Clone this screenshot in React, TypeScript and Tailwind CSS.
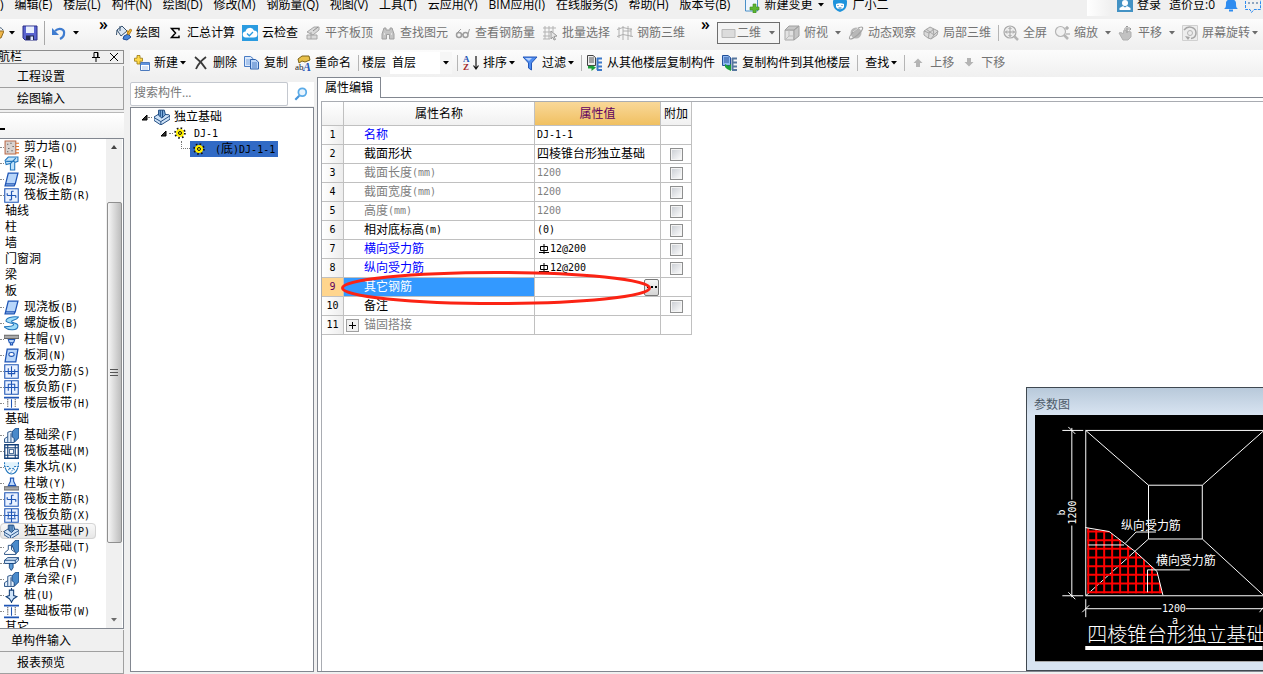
import React from "react";

const UI = "font-['Open_Sans','Noto_Sans_CJK_SC',sans-serif]";
const BITMAP = "font-['DejaVu_Sans_Mono','Noto_Sans_CJK_SC',monospace]";

/** Mixed CJK / half-width text: half-width runs are half the CJK advance. */
function Mixed({ text }: { text: string }) {
  return (
    <>
      {text.split(/([\x20-\x7e]+)/).map((part, i) =>
        /^[\x20-\x7e]+$/.test(part) ? (
          <span key={i} className="text-[10px] leading-none">{part}</span>
        ) : (
          part
        ),
      )}
    </>
  );
}

function Svg({ children, className = "size-4", box = "0 0 16 16" }: { children: React.ReactNode; className?: string; box?: string }) {
  return (
    <svg viewBox={box} className={`${className} block shrink-0`} fill="none" aria-hidden="true">
      {children}
    </svg>
  );
}

const Caret = ({ muted = false }: { muted?: boolean }) => (
  <svg viewBox="0 0 6 4" className="block h-1 w-1.5 shrink-0" aria-hidden="true">
    <path d="M0 0h6L3 3.5z" fill={muted ? "#6b6b6b" : "#000"} />
  </svg>
);

const PaintIcon = () => (
  <Svg>
    <path d="M1 5 6 1l5 5-6 5z" fill="#dbe6f2" stroke="#35506e" />
    <path d="M4 1v5M1 5l-.5 5" stroke="#35506e" />
    <path d="M11 6c2 1 1 3 1 4" stroke="#e0a020" strokeWidth="2" />
    <path d="m8 11 4-2 3 3-4 3-4-1z" fill="#4a86d8" stroke="#1c4a96" />
    <path d="m11 9 3-5 2 1-3 5z" fill="#f0b429" stroke="#8b5b12" strokeWidth=".6" />
  </Svg>
);
const SigmaIcon = () => (
  <Svg>
    <path d="M12 5.500V3.500H4.500l4 4.500-4 4.500H12v-2" stroke="#000" strokeWidth="1.500" />
  </Svg>
);
const CloudCheckIcon = () => (
  <Svg>
    <path d="M0 0h16v16H0z" fill="#2a9be0" />
    <path d="M4 12.500a3 3 0 0 1-.5-6A4.500 4.500 0 0 1 12 5.500a3.500 3.500 0 0 1 0 7z" fill="#fff" />
    <path d="m5 8.500 2.300 2.300L11 7" stroke="#2a9be0" strokeWidth="1.300" />
  </Svg>
);
const AlignSlabIcon = () => (
  <Svg>
    <path d="M2 7 9 2h5v3L8 10zM2 10h10v4H2zM6 7v7" fill="#d9d9d9" stroke="#a6a6a6" />
    <path d="m8 6 5-4" stroke="#8d8d8d" />
  </Svg>
);
const BinocularsIcon = () => (
  <Svg>
    <path d="M4 3h2v2h4V3h2l2 6v5H9.500V9.500h-3V14H2V9z" fill="#c4c4c4" stroke="#a0a0a0" />
    <path d="M4 9h1M11 9h1" stroke="#fff" />
  </Svg>
);
const GlassesIcon = () => (
  <Svg>
    <circle cx="4" cy="10" r="2.500" stroke="#9d9d9d" strokeWidth="1.500" />
    <circle cx="10.500" cy="10" r="2.500" stroke="#9d9d9d" strokeWidth="1.500" />
    <path d="M6.500 9.500h1.500M2 8l4-4M13 9l1.500-5" stroke="#9d9d9d" />
  </Svg>
);
const BatchIcon = () => (
  <Svg>
    <path d="M3 1v13M7 1v13M11 1v6M1 3h13M1 7h8M1 11h7M1 14h7" stroke="#b3b3b3" />
    <path d="m9 6 6 5-3 .5 1.500 3-1.500.5-1.300-3L9 14z" fill="#e6e6e6" stroke="#999" />
  </Svg>
);
const Rebar3dIcon = () => (
  <Svg>
    <path d="M2 2v11M6 1v14M11 1v14M14 3v9M0 4.500l6-2 9 2M0 11.500l6-2 10 2M6 6h8" stroke="#b0b0b0" />
  </Svg>
);
const FlatIcon = () => (
  <Svg>
    <path d="M1 4.500h13v8H1z" fill="#dcdcdc" stroke="#b8b8b8" />
  </Svg>
);
const CubeIcon = () => (
  <Svg>
    <path d="M1 5h9v10H1z" fill="#e2e2e2" stroke="#a8a8a8" />
    <path d="m1 5 4-4h10l-5 4zM10 5l5-4v10l-5 4z" fill="#c6c6c6" stroke="#a0a0a0" />
    <path d="M5 5v6h5M5 11l-4 4" stroke="#bcbcbc" />
  </Svg>
);
const OrbitIcon = () => (
  <Svg>
    <circle cx="8" cy="8" r="5.500" fill="#b8b8b8" />
    <ellipse cx="8" cy="8" rx="8.500" ry="2.500" transform="rotate(-42 8 8)" stroke="#a2a2a2" strokeWidth="1.200" />
    <path d="m5 7 5-4" stroke="#e0e0e0" />
  </Svg>
);
const Part3dIcon = () => (
  <Svg>
    <path d="m1 6 6-4 4 2 4 2-1 4-6 4-3-1-4-3z" fill="#dadada" stroke="#a5a5a5" />
    <path d="m1 6 5 2 5-4M6 8l-.500 5M10 4l1 6 4-4M3 4l8 6M8 14l3-4" stroke="#a5a5a5" />
  </Svg>
);
const FullIcon = () => (
  <Svg>
    <circle cx="7" cy="7" r="6" fill="#eee" stroke="#a9a9a9" strokeWidth="1.200" />
    <path d="M7 2.500v9M2.500 7h9M5.500 4 7 2.500 8.500 4M5.500 10 7 11.500 8.500 10M4 5.500 2.500 7 4 8.500M10 5.500 11.500 7 10 8.500" stroke="#a0a0a0" />
    <path d="m11.500 11.500 3.500 3.500" stroke="#b5b5b5" strokeWidth="2.500" />
  </Svg>
);
const ZoomIcon = () => (
  <Svg>
    <circle cx="6.500" cy="6.500" r="5" fill="#f1f1f1" stroke="#b5b5b5" strokeWidth="1.200" />
    <path d="m10 10 4 4" stroke="#b5b5b5" strokeWidth="2.500" />
    <path d="M13 1v4M11 3h4M12 9h4" stroke="#9a9a9a" />
  </Svg>
);
const PanIcon = () => (
  <Svg>
    <path d="M1 8c2-1 3 0 4 1l1-4 3 1 4 1v5l-3 3H5z" fill="#c2c2c2" stroke="#b0b0b0" />
    <path d="M9 1v7M6 4h7M7.500 2.500 9 1l1.500 1.500M11.500 2.500 13 4l-1.500 1.500" stroke="#999" />
  </Svg>
);
const RotateIcon = () => (
  <Svg>
    <path d="M.500.500h15v15H.500z" fill="#ededed" stroke="#d0d0d0" />
    <path d="M2 5c4-5 12-3 12 3 0 3-2 5-5 5.500" stroke="#a5a5a5" strokeWidth="1.500" />
    <circle cx="8" cy="8" r="2.500" stroke="#b5b5b5" />
    <path d="m3 11 5 1-2 3z" fill="#a5a5a5" />
  </Svg>
);

const OpenIcon = () => (
  <Svg className="h-4 w-1" box="12 0 4 16">
    <path d="M8 13 11 6h5l-3 7z" fill="#f0b648" stroke="#8f6a25" />
    <path d="M9 5c2-3 4-3 6 0" stroke="#35506e" />
  </Svg>
);
const SaveIcon = () => (
  <Svg>
    <path d="M1 1h14v14H3l-2-2z" fill="#5963cf" stroke="#2a2f86" />
    <path d="M4 1.500h8V8H4z" fill="#e8eefc" />
    <path d="M4 10.500h8V15H4z" fill="#23284f" />
    <path d="M8.500 11.500h2.500V15H8.500z" fill="#dfe6ff" />
  </Svg>
);
const UndoIcon = () => (
  <Svg>
    <path d="M4 6c4-4 10-2 9 3 0 3-2 4-4 5" stroke="#3f7cd0" strokeWidth="2.200" />
    <path d="M1 3v7h7z" fill="#3f7cd0" />
  </Svg>
);

const NewIcon = () => (
  <Svg>
    <path d="M6.500 7.500h9v8h-9z" fill="#fff" stroke="#4b79bd" />
    <path d="M7 8h8v2H7z" fill="#5f92dd" />
    <path d="M8 12h6M8 14h6" stroke="#a9c4ea" />
    <path d="M3 .500h3v2.700h2.500v3H6V9H3V6.200H.500v-3H3z" fill="#ffd94a" stroke="#9a7a10" strokeWidth=".8" />
  </Svg>
);
const DeleteIcon = () => (
  <Svg>
    <path d="M2 2c4 3 8 7 11 12M13 2C9 5 5 9 3 14" stroke="#3a3a3a" strokeWidth="1.800" />
  </Svg>
);
const CopyIcon = () => (
  <Svg>
    <path d="M.500 1.500h6l2.500 2v8H.500z" fill="#dce9fb" stroke="#4a7cc4" />
    <path d="M2 5h5M2 7h5M2 9h5" stroke="#7aa4de" />
    <path d="M6.500 4.500h5l3 2.500v7h-8z" fill="#bdd6f8" stroke="#2f62ad" />
    <path d="M8 8h5M8 10h5M8 12h5" stroke="#4a7cc4" />
  </Svg>
);
const RenameIcon = () => (
  <Svg>
    <path d="m3 4 4-3h7l1 4-5 2-3-1-3 2z" fill="#e8c04a" stroke="#7e6418" />
    <text x="0" y="15" fontSize="9" fill="#222" fontFamily="Liberation Serif">ab</text>
    <text x="8" y="16" fontSize="12" fontWeight="bold" fontStyle="italic" fill="#2458b8" fontFamily="Liberation Serif">A</text>
  </Svg>
);
const SortIcon = () => (
  <Svg>
    <text x="0" y="7" fontSize="9" fontWeight="bold" fill="#2455b4" fontFamily="Liberation Serif">A</text>
    <text x="0" y="15" fontSize="9" fontWeight="bold" fill="#a32828" fontFamily="Liberation Serif">Z</text>
    <path d="M13 1v12M10.500 10.500 13 14l2.500-3.500" stroke="#111" strokeWidth="1.200" />
  </Svg>
);
const FilterIcon = () => (
  <Svg>
    <path d="M1 2h14L9.500 8v7l-3-2V8z" fill="#4f8df0" stroke="#2457b8" />
    <path d="M3 3h7L7 6z" fill="#b7d3ff" />
  </Svg>
);
const FromFloorIcon = () => (
  <Svg>
    <path d="M.500.500H6l2.500 2v8h-8z" fill="#eee" stroke="#444" />
    <path d="M2 3h5M2 5h5M2 7h5" stroke="#555" />
    <path d="M10 3.500h5M10 7.500h5M10 11.500h5M10 15h5M10.500 3v12" stroke="#3d78c8" strokeWidth="2" />
    <path d="M1 11v2.500h3.500V16L9 12.500 4.500 10v1z" fill="#1da03a" />
  </Svg>
);
const ToFloorIcon = () => (
  <Svg>
    <path d="M.500.500H6l2.500 2v8h-8z" fill="#8fb8f0" stroke="#23509a" />
    <path d="M2 3h5M2 5h5M2 7h5" stroke="#23509a" />
    <path d="M10 3.500h5M10 7.500h5M10 11.500h5M10 15h5M10.500 3v12" stroke="#56779f" strokeWidth="2" />
    <path d="M9 16V9l-2.500 2L3 9v3l2 2z" fill="#1da03a" />
  </Svg>
);
const ArrowIcon = ({ down = false }: { down?: boolean }) => (
  <Svg>
    <path d={down ? "M6 3h4v4h2.500L8 11.500 3.500 7H6z" : "M6 12h4V8h2.500L8 3.500 3.500 8H6z"} fill="#b4b4b4" />
  </Svg>
);

type Tool = { label: string; icon?: () => React.ReactElement; caret?: boolean; off?: boolean };

function ToolButton({ label, icon: Icon, caret, off, caretGap = "ml-0.5" }: Tool & { caretGap?: string }) {
  return (
    <button type="button" className={`flex shrink-0 items-center whitespace-nowrap ${off ? "text-[#737373]" : "text-black"}`}>
      {Icon && <span className="mr-1"><Icon /></span>}
      {label}
      {caret && <span className={caretGap}><Caret muted={off} /></span>}
    </button>
  );
}

const Sep = () => <span className="h-4 w-px shrink-0 bg-[#b5b5b5]" />;
const More = () => <span className="self-start font-['Open_Sans',sans-serif] text-base font-semibold leading-[10px] text-black">»</span>;

const menus = ["编辑(E)", "楼层(L)", "构件(N)", "绘图(D)", "修改(M)", "钢筋量(Q)", "视图(V)", "工具(T)", "云应用(Y)", "BIM应用(I)", "在线服务(S)", "帮助(H)", "版本号(B)"];

function MenuBar() {
  return (
    <header className="flex h-[19px] shrink-0 items-start overflow-hidden bg-[#f0f0f0] leading-[10px]">
      <nav className="flex shrink-0 items-center gap-[11px] whitespace-nowrap">
        <a href="#file">)</a>
        {menus.map((m) => (
          <a key={m} href={`#${m}`}>{m}</a>
        ))}
      </nav>
      <button type="button" className="ml-3.5 flex h-[10px] shrink-0 items-center gap-1 whitespace-nowrap">
        <Svg className="size-4">
          <path d="M1.500 0h9l3 3v11h-12z" fill="#eef5fd" stroke="#4a90c8" />
          <path d="M9 7h3v3h3v3h-3v3H9v-3H6v-3h3z" fill="#5cb531" stroke="#3c8a1c" strokeWidth=".6" />
        </Svg>
        新建变更
        <span className="ml-0.5"><Caret /></span>
      </button>
      <button type="button" className="ml-2 flex h-[10px] shrink-0 items-center gap-1 whitespace-nowrap">
        <Svg>
          <path d="M1 4c1-3 5-3 7-2 2-1 6-1 7 2 0 4 0 9-7 11C1 13 1 7 1 4z" fill="#1e93dc" />
          <path d="M4 7c2-1 6-1 8 0v3c-2 3-6 3-8 0z" fill="#fff" />
          <path d="M6 8v1M10 8v1M6.500 11h3" stroke="#1668a8" />
        </Svg>
        广小二
      </button>
      <span className="ml-auto mr-1.5 h-4 w-6 shrink-0 bg-gradient-to-r from-white to-[#f0f0f0]" />
      <button type="button" className="flex h-[10px] shrink-0 items-center gap-1 whitespace-nowrap">
        <Svg>
          <path d="M0 0h16v15H0z" fill="#4392c4" />
          <circle cx="8" cy="6" r="3" fill="#fff" />
          <path d="M2.500 13v-2L6 9l2 1.500L10 9l3.500 2v2z" fill="#fff" />
        </Svg>
        登录
      </button>
      <span className="ml-2 shrink-0 whitespace-nowrap">造价豆:0</span>
      <button type="button" aria-label="通知" className="ml-2 flex h-[10px] shrink-0 items-center">
        <Svg>
          <path d="M1 12c2-1 2-3 2-6 0-5 10-5 10 0 0 3 0 5 2 6z" fill="#2e8cf0" />
          <path d="M6 13.500h4" stroke="#2e8cf0" strokeWidth="2" />
        </Svg>
      </button>
      <button type="button" aria-label="消息" className="ml-1.5 mr-0.5 flex h-[10px] shrink-0 items-center">
        <Svg>
          <path d="M.500 0v12.500H5l1.500 3L9 12.500h6.500V0" stroke="#2e8cf0" strokeDasharray="3 1" />
          <path d="M3 6h2M7 6h2M11 6h2" stroke="#2e5c90" />
        </Svg>
      </button>
    </header>
  );
}

const drawTools: Tool[] = [
  { label: "绘图", icon: PaintIcon },
  { label: "汇总计算", icon: SigmaIcon },
  { label: "云检查", icon: CloudCheckIcon },
  { label: "平齐板顶", icon: AlignSlabIcon, off: true },
  { label: "查找图元", icon: BinocularsIcon, off: true },
  { label: "查看钢筋量", icon: GlassesIcon, off: true },
  { label: "批量选择", icon: BatchIcon, off: true },
  { label: "钢筋三维", icon: Rebar3dIcon, off: true },
];
const viewTools: Tool[] = [
  { label: "俯视", icon: CubeIcon, caret: true, off: true },
  { label: "动态观察", icon: OrbitIcon, off: true },
  { label: "局部三维", icon: Part3dIcon, off: true },
];
const zoomTools: Tool[] = [
  { label: "全屏", icon: FullIcon, off: true },
  { label: "缩放", icon: ZoomIcon, caret: true, off: true },
  { label: "平移", icon: PanIcon, caret: true, off: true },
];

function MainToolbar() {
  return (
    <div className="flex h-[30px] shrink-0 items-center overflow-hidden bg-gradient-to-b from-[#fcfcfc] to-[#efefef] pb-0.5">
      <button type="button" aria-label="打开" className="flex shrink-0 items-center gap-[5px]"><OpenIcon /><Caret /></button>
      <button type="button" aria-label="保存" className="ml-[7px] shrink-0"><SaveIcon /></button>
      <span className="mx-1.5 h-6 w-px shrink-0 bg-[#a8a8a8]" />
      <button type="button" aria-label="撤销" className="flex shrink-0 items-center gap-1.5"><UndoIcon /><Caret /></button>
      <span className="ml-5 flex h-full shrink-0"><More /></span>
      <div className="ml-2 flex shrink-0 items-center gap-[7px]">
        {drawTools.map((t) => <ToolButton key={t.label} {...t} />)}
      </div>
      <span className="ml-4 flex h-full shrink-0"><More /></span>
      <button type="button" className="ml-[7px] flex h-[22px] shrink-0 items-center border border-[#6e6e6e] bg-[#f4f4f4] pl-[3px] pr-1 text-[#737373]">
        <FlatIcon />
        二维
        <span className="ml-2"><Caret muted /></span>
      </button>
      <div className="ml-1 flex shrink-0 items-center gap-[7px]">
        {viewTools.map((t) => <ToolButton key={t.label} {...t} caretGap="ml-[7px]" />)}
        <Sep />
      </div>
      <div className="ml-1 flex shrink-0 items-center gap-[7px]">
        {zoomTools.map((t) => <ToolButton key={t.label} {...t} caretGap="ml-[7px]" />)}
        <ToolButton label="屏幕旋转" icon={RotateIcon} caret off />
      </div>
    </div>
  );
}

function EditToolbar() {
  return (
    <div className="flex h-[27px] shrink-0 items-center gap-[7px] overflow-hidden bg-gradient-to-b from-[#fcfcfc] to-[#f0f0f0] pb-0.5 pl-1">
      <ToolButton label="新建" icon={NewIcon} caret />
      <ToolButton label="删除" icon={DeleteIcon} />
      <ToolButton label="复制" icon={CopyIcon} />
      <ToolButton label="重命名" icon={RenameIcon} />
      <span className="flex shrink-0 items-center gap-[5px]">
        <Sep />
        <span className="-ml-0.5 flex shrink-0 items-center gap-1">
          <label htmlFor="floor">楼层</label>
          <span className="relative flex h-[22px] w-[62px] items-center bg-white">
            <select id="floor" defaultValue="首层" className="h-full w-full appearance-none bg-transparent pl-0.5 outline-none">
              <option>首层</option>
            </select>
            <span className="pointer-events-none absolute right-0 flex h-full items-center bg-[#f6f6f6] px-[3px]"><Caret /></span>
          </span>
        </span>
        <Sep />
        <ToolButton label="排序" icon={SortIcon} caret />
      </span>
      <ToolButton label="过滤" icon={FilterIcon} caret />
      <span className="flex shrink-0 items-center gap-[5px]">
        <Sep />
        <ToolButton label="从其他楼层复制构件" icon={FromFloorIcon} />
      </span>
      <ToolButton label="复制构件到其他楼层" icon={ToFloorIcon} />
      <Sep />
      <ToolButton label="查找" caret />
      <span className="flex shrink-0 items-center gap-[5px]">
        <Sep />
        <ToolButton label="上移" icon={ArrowIcon} off />
      </span>
      <ToolButton label="下移" icon={() => <ArrowIcon down />} off />
    </div>
  );
}

const B = "#1f55b5";
const D = "#123f78";
const frame = <path d="M.700.700h12.600v12.600H.700z" fill="#eaf2ff" stroke={B} strokeWidth="1" />;
const glyphs: Record<string, React.ReactNode> = {
  wall: (<><path d="M1 1h10v12H1z" fill="#d9d3d0" stroke="#b86a4a" /><path d="M3 4h1M6 3h1M8 6h1M4 8h1M7 10h1M3 11h1" stroke="#444" /><path d="M11 3h3M11 6h3M11 9h3M11 12h3" stroke="#e0742c" /></>),
  beam: (<path d="M1 4 4 1h9v4l-3 1v7H6V7L2 8zM6 7l5-5M2 5h8" fill="#bfe2fa" stroke="#2377bd" />),
  slab: (<path d="M4 1h9l-2.500 10-1 2H1l.500-2zM1.500 11h9" fill="#b8d6fa" stroke={B} strokeWidth="1.200" />),
  main: (<>{frame}<path d="M7 3v8M3 7h8M3 5v2M11 7v2M7 3h2M5 11h2" stroke={B} strokeWidth="1.100" /></>),
  spiral: (<path d="M13.500 1C8 0 1 2 2 5c1 2 7 1 7 3s-5 2-9 2c4 4 13 4 13-1 0-3-6-2-6-4 0-1 5-1 6.500-4z" fill="#9edcf8" stroke="#2377bd" />),
  cap: (<><path d="M0 3h14v3H0z" fill="#aaa" stroke="#666" /><path d="M4 7h6l-1 3H5zM6 10h2v2H6z" fill="#bcd8fa" stroke={B} /></>),
  hole: (<><path d="M3 1h10l-2 12H1z" fill="#b8d6fa" stroke={B} strokeWidth="1.200" /><ellipse cx="7" cy="6" rx="2.500" ry="1.800" fill="#fff" stroke={B} /></>),
  force: (<>{frame}<path d="M1 7h12M7 2v10M4 4v5h6V5" stroke={B} /></>),
  neg: (<>{frame}<path d="M1 7h12M7 1v12M4 10V4h6v6" stroke={B} /></>),
  strip: (<><path d="M0 1.500h14M0 12.500h14" stroke={B} strokeWidth="1.500" /><path d="M3.500 3v8M10.500 3v8" stroke="#333" strokeDasharray="1 1" /><path d="M7 3v8" stroke={B} /></>),
  fbeam: (<><path d="m6 5 5-5h3v9l-4 4z" fill="#4a8aca" stroke={D} strokeWidth=".8" /><path d="M.500 13.500V10l3-2V4l3-1 1 1v4l2 2v3.500z" fill="#e4f0fc" stroke={D} strokeWidth=".8" /><path d="M3.500 8v5M6.500 5v8" stroke={D} strokeWidth=".8" /></>),
  raft: (<><path d="M.700.700h12.600v12.600H.700z" fill="#fff" stroke={D} strokeWidth="1.200" /><path d="M3.500 1v12M10.500 1v12M1 3.500h12M1 10.500h12" stroke={D} /><path d="M5 5h4v4H5z" stroke={D} strokeWidth=".8" /></>),
  pit: (<><path d="M.500 2v4H4c0 3 6 3 6 0h3.500V2" fill="#e0f2fc" stroke="#2377bd" strokeDasharray="2 1" /><path d="M1 7c1 3 3 6 6 6s5-3 6-6M4 9h1M7 10h1M9 9h1M6 11.500h1" stroke="#2377bd" /></>),
  pier: (<><path d="M0 10h14v3H0z" fill="#aaa" stroke="#666" /><path d="M4 9h7L9 5V2H6v3z" fill="#bcd8fa" stroke={B} /></>),
  rneg: (<>{frame}<path d="M1 7h12M7 1v12M3 4h8M3 10h8M4 5v4M10 5v4" stroke={B} /></>),
  pad: (<><path d="M0 7 4 4.500 13 5l1 1v3l-8 5-6-4z" fill="#cfe3f8" stroke={D} strokeWidth=".8" /><path d="m0 7.500 6 3.500 8-5M6 11v3" stroke={D} strokeWidth=".8" /><path d="M4 1h5l1 4-3 3-3-2.500z" fill="#7fb0e0" stroke={D} strokeWidth=".8" /><path d="M5.500 1v5.500M7.500 1v6" stroke={D} strokeWidth=".8" /></>),
  stripf: (<><path d="m7 4 4-4h3v10l-3 3z" fill="#4a8aca" stroke={D} strokeWidth=".8" /><path d="M.500 13.500V12L4 9V5h3v4l4 3v1.500z" fill="#fff" stroke={D} strokeWidth=".8" /></>),
  pilecap: (<><path d="m.500 4 3-2.500h10V4l-3 3h-10z" fill="#cfe3f8" stroke={D} strokeWidth=".8" /><path d="M.500 4h10l3-2.500M10.500 4v3" stroke={D} strokeWidth=".8" /><path d="M5 7h3.500v4l-1.700 2.500L5 11z" fill="#5b9bd8" stroke={D} strokeWidth=".8" /></>),
  pile: (<><path d="M7 0v14" stroke={D} /><path d="M5 2h4v5l3 1-3 2-2 3-2-3-3-2 3-1z" fill="#cfe4fa" stroke={D} /></>),
};

type Comp = [label: string, glyph?: string];
const components: Comp[] = [
  ["剪力墙(Q)", "wall"], ["梁(L)", "beam"], ["现浇板(B)", "slab"], ["筏板主筋(R)", "main"],
  ["轴线"], ["柱"], ["墙"], ["门窗洞"], ["梁"], ["板"],
  ["现浇板(B)", "slab"], ["螺旋板(B)", "spiral"], ["柱帽(V)", "cap"], ["板洞(N)", "hole"],
  ["板受力筋(S)", "force"], ["板负筋(F)", "neg"], ["楼层板带(H)", "strip"],
  ["基础"],
  ["基础梁(F)", "fbeam"], ["筏板基础(M)", "raft"], ["集水坑(K)", "pit"], ["柱墩(Y)", "pier"],
  ["筏板主筋(R)", "main"], ["筏板负筋(X)", "rneg"], ["独立基础(P)", "pad"], ["条形基础(T)", "stripf"],
  ["桩承台(V)", "pilecap"], ["承台梁(F)", "fbeam"], ["桩(U)", "pile"], ["基础板带(W)", "strip"],
  ["其它"],
];

function NavButton({ children }: { children: string }) {
  return (
    <button type="button" className="h-[22px] shrink-0 border-b border-r border-[#a0a0a0] bg-[#f0f0f0] pr-[41px] text-center">
      {children}
    </button>
  );
}

function Sidebar() {
  return (
    <aside className={`flex w-[124px] shrink-0 flex-col overflow-hidden bg-[#f0f0f0] ${BITMAP}`}>
      <div className="mb-0.5 mt-px flex h-[14px] shrink-0 items-center border border-l-0 border-[#8c8c8c]">
        <span className="-ml-0.5 leading-3">航栏</span>
        <button type="button" aria-label="固定" className="ml-auto">
          <Svg className="size-2.5" box="0 0 10 10"><path d="M3 .500h4v5H3zM1 5.500h8M5 5.500V10M6.500 1v4" stroke="#000" /></Svg>
        </button>
        <button type="button" aria-label="关闭" className="ml-2 mr-1">
          <Svg className="size-2.5" box="0 0 10 10"><path d="m1 1 8 8M9 1 1 9" stroke="#000" /></Svg>
        </button>
      </div>
      <NavButton>工程设置</NavButton>
      <NavButton>绘图输入</NavButton>
      <div className="mt-0.5 flex h-[26px] shrink-0 items-center border-t border-[#b8b8b8] bg-gradient-to-b from-white to-[#f2f2f2]">
        <span className="mt-1.5 h-0.5 w-[5px] bg-black" />
      </div>
      <div className="flex min-h-0 flex-1 border-b border-r border-t border-[#828790] bg-white">
        <ul className="min-w-0 flex-1 overflow-hidden">
          {components.map(([label, glyph], i) => (
            <li
              key={i}
              className={`mr-2.5 flex h-4 items-center whitespace-nowrap ${label === "独立基础(P)" ? "rounded-sm bg-gradient-to-b from-[#fafafa] to-[#e6e6e6] outline outline-1 -outline-offset-1 outline-[#d4d4d4]" : ""}`}
            >
              {glyph ? (
                <>
                  <span className="h-px w-1 shrink-0 border-t border-dotted border-[#8a8a8a]" />
                  <Svg className="mr-[5px] size-[15px]" box="0 0 14 14">{glyphs[glyph]}</Svg>
                  <span><Mixed text={label} /></span>
                </>
              ) : (
                <span className="pl-[5px]">{label}</span>
              )}
            </li>
          ))}
        </ul>
        <div className="mr-px flex w-4 shrink-0 flex-col items-center bg-[#f0f0f0]">
          <span className="flex h-4 shrink-0 items-center"><svg viewBox="0 0 6 4" className="h-1 w-1.5"><path d="M0 4h6L3 0z" fill="#444" /></svg></span>
          <span className="grow-[48]" />
          <span className="flex w-[15px] grow-[339] flex-col items-center justify-center gap-px rounded-xs border border-[#8f8f8f] bg-gradient-to-r from-[#f6f6f6] to-[#bdbdbd]">
            <i className="h-0.5 w-2 border-b border-[#555]" />
            <i className="h-0.5 w-2 border-b border-[#555]" />
            <i className="h-0.5 w-2 border-b border-[#555]" />
          </span>
          <span className="grow-[71]" />
          <span className="flex h-4 shrink-0 items-center"><Caret muted /></span>
        </div>
      </div>
      <div className="mt-px flex shrink-0 flex-col"><NavButton>单构件输入</NavButton><NavButton>报表预览</NavButton></div>
    </aside>
  );
}

const Expander = () => (
  <Svg className="size-[7px]" box="0 0 7 7"><path d="M6 1v5H1z" fill="#333" stroke="#000" /></Svg>
);
const Gear = () => (
  <Svg className="size-3" box="0 0 12 12">
    <circle cx="6" cy="6" r="4.800" stroke="#111" strokeWidth="2" strokeDasharray="1.600 2.170" />
    <circle cx="6" cy="6" r="4" fill="#ffee00" />
    <circle cx="6" cy="6" r="1.500" fill="#ffee00" stroke="#111" />
  </Svg>
);

function ComponentPanel() {
  return (
    <section className="flex w-[184px] shrink-0 flex-col bg-[#f0f0f0]">
      <div className="flex h-[30px] shrink-0 items-center pt-1">
        <input aria-label="搜索构件" placeholder="搜索构件..." className="h-6 w-[158px] rounded-xs border border-[#c4c8cf] bg-white px-[3px] pb-1 outline-none placeholder:text-[#777]" />
        <button type="button" aria-label="搜索" className="flex h-6 flex-1 items-center justify-center bg-white">
          <Svg className="size-[14px]"><circle cx="9.500" cy="6" r="4.500" fill="#e8f4fe" stroke="#5aabe8" strokeWidth="2" /><path d="m6 10-4.500 4.500" stroke="#4796dc" strokeWidth="2.500" /></Svg>
        </button>
      </div>
      <ul className={`min-h-0 flex-1 border border-[#828790] bg-white pl-2.5 pt-px ${BITMAP}`}>
        <li className="flex h-4 items-center">
          <Expander />
          <span className="w-1 border-t border-dotted border-[#777]" />
          <Svg className="ml-0.5 size-4" box="0 0 14 14">{glyphs.pad}</Svg>
          <span className="ml-1">独立基础</span>
        </li>
        <li className="ml-[19px] flex h-4 items-center">
          <Expander />
          <span className="mx-px ml-0.5 w-1 border-t border-dotted border-[#777]" />
          <Gear />
          <span className="ml-2"><Mixed text="DJ-1" /></span>
        </li>
        <li className="ml-10 flex h-4 items-center">
          <span className="h-2 w-[9px] self-start border-b border-l border-dotted border-[#777]" />
          <span className="flex h-4 items-center bg-[#316ac5] px-[3px]">
            <Gear />
            <span className="ml-2.5"><Mixed text="(底)DJ-1-1" /></span>
          </span>
        </li>
      </ul>
    </section>
  );
}

type Row = { name: string; value?: string; tone?: string; valueTone?: string; check?: boolean };
const GRAY = "text-[#808080]";
const BLUE = "text-[#0000ff]";
const rows: Row[] = [
  { name: "名称", value: "DJ-1-1", tone: BLUE },
  { name: "截面形状", value: "四棱锥台形独立基础", check: true },
  { name: "截面长度(mm)", value: "1200", tone: GRAY, valueTone: GRAY, check: true },
  { name: "截面宽度(mm)", value: "1200", tone: GRAY, valueTone: GRAY, check: true },
  { name: "高度(mm)", value: "1200", tone: GRAY, valueTone: GRAY, check: true },
  { name: "相对底标高(m)", value: "(0)", check: true },
  { name: "横向受力筋", value: "12@200", tone: BLUE, check: true },
  { name: "纵向受力筋", value: "12@200", tone: BLUE, check: true },
  { name: "其它钢筋", tone: "text-white" },
  { name: "备注", check: true },
  { name: "锚固搭接", tone: GRAY },
];
const CELL = "border-b border-r border-[#c0c0c0] p-0 font-normal";

function PropertyTable() {
  return (
    <div className="relative w-[370px]">
      <table className={`w-full table-fixed border-separate border-spacing-0 ${BITMAP}`}>
        <colgroup>
          <col className="w-[22px]" />
          <col className="w-[191px]" />
          <col className="w-[126px]" />
          <col className="w-[31px]" />
        </colgroup>
        <thead>
          <tr className="h-6 bg-gradient-to-b from-white to-[#f0f0f0]">
            <th className={CELL} aria-label="序号" />
            <th className={CELL}>属性名称</th>
            <th className={`${CELL} bg-gradient-to-b from-[#f9d898] to-[#f0c060] text-[#600060]`}>属性值</th>
            <th className={`${CELL} whitespace-nowrap`}>附加</th>
          </tr>
        </thead>
        <tbody>
          {rows.map((r, i) => {
            const active = i === 8;
            return (
              <tr key={r.name} className="h-[19px]">
                <th className={`${CELL} ${active ? "bg-[#ffd58d] text-[#600060]" : "bg-gradient-to-r from-white to-[#ededed]"}`}>
                  <span className="flex h-[18px] items-center justify-center"><Mixed text={String(i + 1)} /></span>
                </th>
                <td className={`${CELL} ${active ? "bg-[#3399ff]" : ""} ${r.tone ?? ""}`}>
                  <span className="flex h-[18px] items-center">
                    <span className="flex w-5 shrink-0 pl-0.5">
                      {i === 10 && (
                        <button type="button" aria-label="展开" className="flex size-[13px] items-center justify-center border border-[#a0a0a0] bg-[#f0f0f0]">
                          <Svg className="size-[9px]" box="0 0 9 9"><path d="M1 4.500h7M4.500 1v7" stroke="#000" /></Svg>
                        </button>
                      )}
                    </span>
                    <Mixed text={r.name} />
                  </span>
                </td>
                <td className={`${CELL} ${r.valueTone ?? ""}`}>
                  <span className="flex h-[18px] items-center pl-0.5">
                    {(i === 6 || i === 7) && (
                      <Svg className="ml-0.5 mr-px size-2.5" box="0 0 10 10"><path d="M5 0v10M1.500 2.500h7v4h-7zM0 8.500h10" stroke="#000" /></Svg>
                    )}
                    {r.value && <Mixed text={r.value} />}
                    {active && (
                      <button type="button" aria-label="更多" className="ml-auto mr-px flex h-[17px] w-[15px] items-center justify-center rounded-xs border border-[#777] bg-gradient-to-b from-[#f7f7f7] to-[#d4d4d4]">
                        <Svg className="h-1 w-3" box="0 0 12 4"><path d="M1 1h2v2H1zM5 1h2v2H5zM9 1h2v2H9z" fill="#000" /></Svg>
                      </button>
                    )}
                  </span>
                </td>
                <td className={CELL}>
                  {r.check && (
                    <input type="checkbox" aria-label={`附加 ${r.name}`} className="mx-auto block size-[13px] appearance-none border border-[#8e8f8f] bg-gradient-to-br from-[#c8ccd2] to-white outline outline-1 -outline-offset-2 outline-[#f4f4f4]" />
                  )}
                </td>
              </tr>
            );
          })}
        </tbody>
      </table>
      <svg viewBox="0 0 312 36" className="pointer-events-none absolute left-[19px] top-[168px] h-9 w-[312px]" fill="none" aria-hidden="true">
        <ellipse cx="155" cy="18" rx="153.500" ry="15.500" stroke="#fb2314" strokeWidth="3" />
      </svg>
    </div>
  );
}

const gridX = Array.from({ length: 10 }, (_, i) => 53 + i * 8);
const gridY = Array.from({ length: 8 }, (_, i) => 117 + i * 8.7);

function ParameterWindow() {
  return (
    <section className="absolute bottom-[3px] right-0 w-[237px] border border-r-0 border-[#3f4850] bg-[#d8e4f1] pb-2 pl-2">
      <h2 className="-ml-2 flex h-[27px] items-center bg-gradient-to-b from-[#b8c9da] to-[#d8e4f1] pl-[7px] pt-1.5 text-[#4c5a68]">参数图</h2>
      <svg viewBox="0 0 228 247" className="block h-[247px] w-[228px] border-b border-[#a8a8a8] bg-black" fill="none" stroke="#fff" fontFamily="'DejaVu Sans Mono','Noto Sans CJK SC',monospace" role="img" aria-label="四棱锥台形独立基础">
        <defs>
          <clipPath id="rebar"><path d="M50 113 74 117 100 137 122 157 128 181H50z" /></clipPath>
        </defs>
        <path d="M229.500 15.500H50.500v166h179M113.500 70.500h54v54h-54zM50.500 15.500l63 55M229.500 15.500l-62 55M50.500 181.500l63-57M229.500 181.500l-62-57" />
        <g clipPath="url(#rebar)" stroke="#f00" strokeWidth="2">
          {gridX.map((x) => <path key={x} d={`M${x} 113V179`} />)}
          {gridY.map((y) => <path key={y} d={`M52 ${y}H128`} />)}
        </g>
        <path d="M50 113 74 117 100 137 122 157 128 181M53 130.500h36M90 129l11-11.500h20M155 155.500h-42.500V178" />
        <path d="M27 15.500h21M27 181.500h21M36.500 13v72M36.500 111v72M33 12l7 7M33 178l7 7" />
        <path d="M50.500 185v18M50.500 194.500h76M151 194.500h77M47 198l7-7M225 198l4-5" />
        <g fill="#fff" stroke="none" fontSize="12">
          <text x="86" y="115">纵向受力筋</text>
          <text x="121" y="151">横向受力筋</text>
          <g fontSize="10" textAnchor="middle">
            <text x="139" y="198">1200</text>
            <text x="140" y="210">a</text>
            <text transform="translate(41 98) rotate(-90)">1200</text>
            <text transform="translate(30 98) rotate(-90)">b</text>
          </g>
          <text x="52" y="228" fontSize="20" fontWeight="300">四棱锥台形独立基础</text>
          <path d="M50 232h178v4H50z" />
        </g>
      </svg>
    </section>
  );
}

function PropertyPanel() {
  return (
    <main className="ml-[3px] flex min-w-0 flex-1 flex-col border-b border-l border-[#828790] bg-white">
      <div className="flex h-[21px] shrink-0 bg-white">
        <button type="button" role="tab" aria-selected="true" className="w-[63px] border-r border-t border-[#828790] bg-white">属性编辑</button>
        <span className="flex-1 border-b border-[#828790]" />
      </div>
      <div className="ml-[3px] mt-[3px] min-h-0 flex-1 border-l border-t border-[#a9acb2]">
        <PropertyTable />
      </div>
    </main>
  );
}

export default function App() {
  return (
    <div className={`relative flex h-screen flex-col overflow-hidden bg-[#f0f0f0] text-[12px] leading-4 text-black ${UI}`}>
      <MenuBar />
      <MainToolbar />
      <div className="flex min-h-0 flex-1">
        <Sidebar />
        <div className="ml-1.5 flex min-w-0 flex-1 flex-col pb-0.5">
          <span className="h-px shrink-0" />
          <EditToolbar />
          <div className="flex min-h-0 flex-1">
            <ComponentPanel />
            <PropertyPanel />
          </div>
        </div>
      </div>
      <ParameterWindow />
    </div>
  );
}
